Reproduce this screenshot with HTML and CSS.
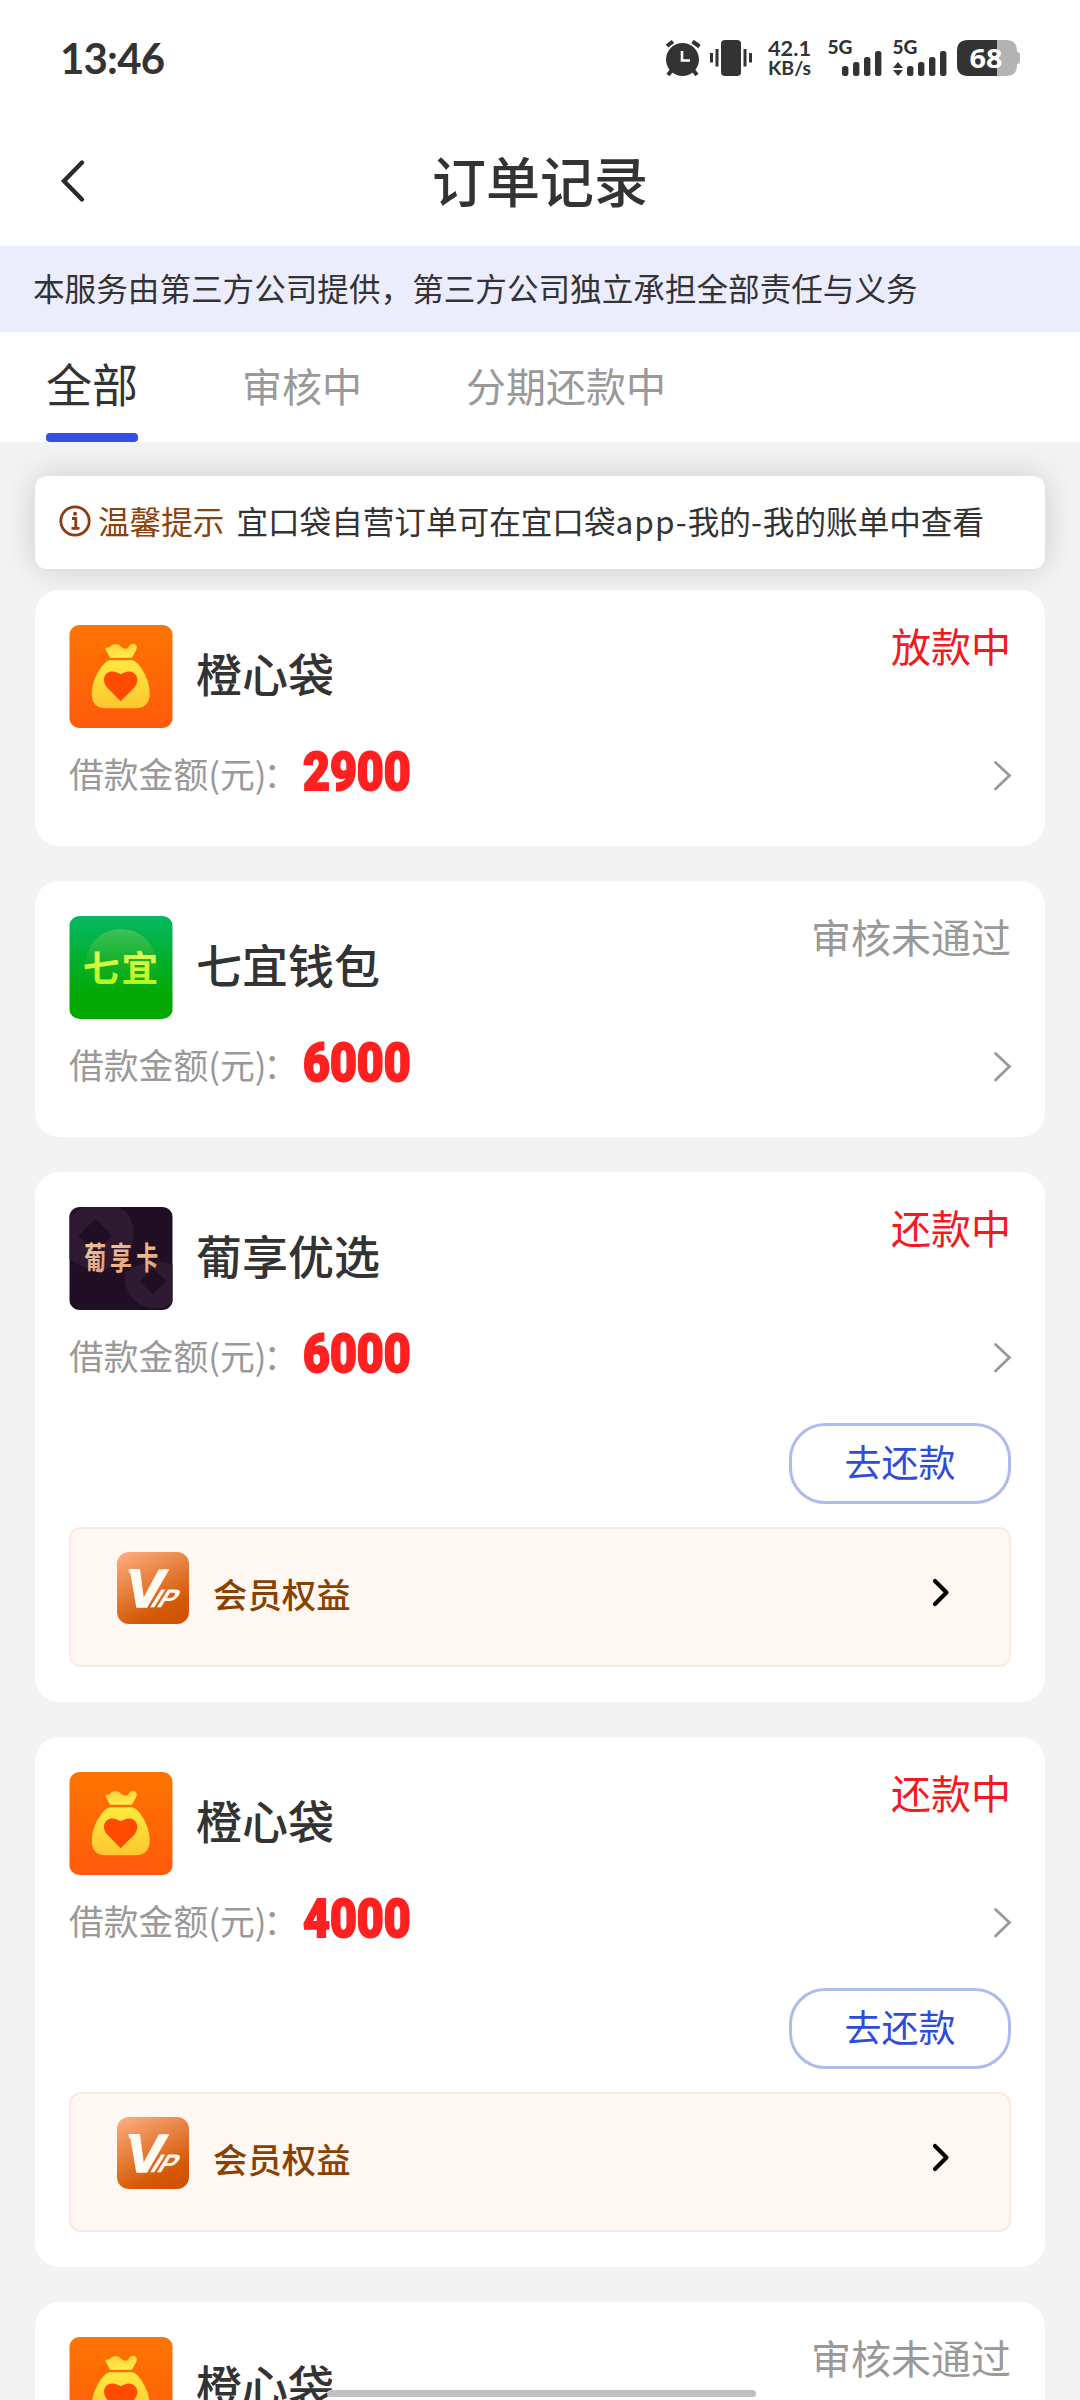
FILE: index.html
```html
<!DOCTYPE html>
<html lang="zh-CN">
<head>
<meta charset="utf-8">
<title>订单记录</title>
<link rel="stylesheet" href="styles.css">
</head>
<body>
<svg class="defs" width="0" height="0">
  <defs>
    <linearGradient id="orange" x1="0" y1="0" x2="0" y2="1"><stop offset="0" stop-color="#ff7500"/><stop offset="1" stop-color="#fe5a0c"/></linearGradient>
    <linearGradient id="gold" x1="0" y1="0" x2="0" y2="1"><stop offset="0" stop-color="#ffe93e"/><stop offset="1" stop-color="#fdc72f"/></linearGradient>
    <linearGradient id="neck" x1="0" y1="0" x2="0" y2="1"><stop offset="0" stop-color="#fdd23a"/><stop offset="1" stop-color="#ffee4a"/></linearGradient>
    <linearGradient id="green" x1="0" y1="0" x2="0" y2="1"><stop offset="0" stop-color="#04b862"/><stop offset=".75" stop-color="#02a906"/><stop offset="1" stop-color="#02a900"/></linearGradient>
    <linearGradient id="glow" x1="0" y1="0" x2="0" y2="1"><stop offset="0" stop-color="#3fc25a"/><stop offset=".6" stop-color="#14ae1c" stop-opacity=".6"/><stop offset="1" stop-color="#02a906" stop-opacity="0"/></linearGradient>
    <linearGradient id="lime" x1="0" y1="0" x2="0" y2="1"><stop offset="0" stop-color="#fdf56a"/><stop offset="1" stop-color="#a4fb0c"/></linearGradient>
    <linearGradient id="copper" x1="0" y1="0" x2="1" y2="1"><stop offset="0" stop-color="#fbd0a8"/><stop offset="1" stop-color="#dc9670"/></linearGradient>
    <linearGradient id="vip" x1=".2" y1="0" x2=".7" y2="1"><stop offset="0" stop-color="#f9a878"/><stop offset=".8" stop-color="#d45a06"/><stop offset="1" stop-color="#d05200"/></linearGradient>
    <symbol id="bag" viewBox="0 0 104 104">
      <rect width="104" height="104" fill="url(#orange)"/>
      <path d="M36 24Q37 22 40 23C43 18 49 18 52 22Q54 24 57 24C60 24 60 19 64 19C68 19 69 23 67 26L63 33H41Z" fill="url(#neck)"/>
      <path d="M41 35.500H63C69 35.500 81 53 81 69C81 79 76 84 67 84H36C27 84 22.500 79 22.500 69C22.500 53 35 35.500 41 35.500Z" fill="url(#gold)"/>
      <path d="M51.700 77L38 63C30 53 39 43.500 48 48Q50 49.500 51.700 49.500Q53.500 49.500 55.500 48C64 43.500 73.500 53 65.500 63Z" fill="#ff4a00"/>
    </symbol>
    <symbol id="next" viewBox="0 0 20 32"><path d="M2.500 2.500L16.500 15.500L2.500 29" fill="none" stroke="#999" stroke-width="2.800" stroke-linecap="round"/></symbol>
    <symbol id="more" viewBox="0 0 18 30"><path d="M3 3L14.500 14.500L3 26" fill="none" stroke="#000" stroke-width="4.200" stroke-linecap="round" stroke-linejoin="round"/></symbol>
    <symbol id="vipmark" viewBox="0 0 72 72">
      <rect width="72" height="72" rx="12" fill="url(#vip)"/>
      <g fill="#fffaf2" stroke="#fffaf2" font-family="Liberation Sans, sans-serif" font-weight="bold">
        <text x="9" y="54.500" font-size="54" font-style="italic" stroke-width="1.600" textLength="38" lengthAdjust="spacingAndGlyphs">V</text>
        <text transform="translate(32 54.500) skewX(-32)" font-size="25" stroke-width=".3" textLength="23" lengthAdjust="spacingAndGlyphs">IP</text>
      </g>
      <path d="M11.500 17H22V21H12Z" fill="#fffaf2"/>
    </symbol>
  </defs>
</svg>
<div class="screen">
  <div class="statusbar">
    <div class="clock">13:46</div>
    <svg class="indicators" width="364" height="60" viewBox="660 28 364 60" fill="#333">
      <circle cx="682.500" cy="59.500" r="16.500"/>
      <path d="M667 46L673 41.500M692.500 41.500L699.500 46.500M672 70L668 75M693 70L697 75" stroke="#333" stroke-width="4" fill="none"/>
      <path d="M682 51V60.500H690" stroke="#fff" stroke-width="2.600" fill="none"/>
      <rect x="721" y="40" width="20" height="36" rx="4"/>
      <path d="M711.500 53V62.500M717 49V66.500M745 49V66.500M750.500 53V62.500" stroke="#333" stroke-width="3"/>
      <g font-family="Lato, sans-serif" font-weight="bold">
        <text x="768" y="55.500" font-size="21" textLength="43" lengthAdjust="spacingAndGlyphs">42.1</text>
        <text x="768" y="75" font-size="19" textLength="43" lengthAdjust="spacingAndGlyphs">KB/s</text>
        <text x="827.500" y="54" font-size="18.500" font-weight="900" textLength="25" lengthAdjust="spacingAndGlyphs">5G</text>
        <text x="892.500" y="54" font-size="18.500" font-weight="900" textLength="25" lengthAdjust="spacingAndGlyphs">5G</text>
      </g>
      <rect x="842" y="66" width="6.400" height="10" rx="2.500"/><rect x="853" y="62" width="6.400" height="14" rx="2.500"/><rect x="864" y="57" width="6.400" height="19" rx="2.500"/><rect x="875" y="51" width="6.400" height="25" rx="2.500"/>
      <path d="M893 68L898 62L903 68ZM893 70L898 76L903 70Z"/>
      <rect x="907" y="66" width="6.400" height="10" rx="2.500"/><rect x="918" y="62" width="6.400" height="14" rx="2.500"/><rect x="929" y="57" width="6.400" height="19" rx="2.500"/><rect x="940" y="51" width="6.400" height="25" rx="2.500"/>
      <path d="M997 40H1006Q1017 40 1017 51V52Q1020 52 1020 55V61Q1020 64 1017 64V65Q1017 76 1006 76H997Z" fill="#b3b3b3"/>
      <path d="M968 40H997V76H968Q957 76 957 65V51Q957 40 968 40Z"/>
      <text x="969.500" y="67.500" font-size="27" font-family="Open Sans, sans-serif" font-weight="bold" fill="#fff" textLength="33" lengthAdjust="spacingAndGlyphs">68</text>
    </svg>
  </div>
  <header class="navbar">
    <svg class="back" width="28" height="46" viewBox="0 0 28 46"><path d="M24 4.500L6 23L24 41.500" fill="none" stroke="#2b2b2b" stroke-width="4.400" stroke-linecap="round"/></svg>
    <h1>订单记录</h1>
  </header>
  <div class="disclaimer"><span>本服务由第三方公司提供，第三方公司独立承担全部责任与义务</span></div>
  <nav class="tabs">
    <span class="tab active">全部</span>
    <span class="tab">审核中</span>
    <span class="tab">分期还款中</span>
  </nav>
  <main>
    <div class="notice">
      <svg class="info" width="32" height="32" viewBox="0 0 32 32" fill="none" stroke="#8d3c12"><circle cx="16" cy="16" r="14.200" stroke-width="2.800"/><path d="M13 13.500H16.800V23M12.500 23.300H20.500" stroke-width="2.800"/><circle cx="16" cy="8.700" r="2" fill="#8d3c12" stroke="none"/></svg>
      <b>温馨提示</b>
      <span>宜口袋自营订单可在宜口袋<i>app-</i>我的<i>-</i>我的账单中查看</span>
    </div>

    <section class="card">
      <div class="head"><svg class="logo"><use href="#bag"/></svg><h2>橙心袋</h2><span class="state red">放款中</span></div>
      <div class="amount"><label>借款金额(元)<em>：</em></label><strong>2900</strong><svg class="next"><use href="#next"/></svg></div>
    </section>

    <section class="card">
      <div class="head">
        <svg class="logo" viewBox="0 0 104 104"><rect width="104" height="104" fill="url(#green)"/><circle cx="52" cy="49" r="36" fill="url(#glow)"/><text x="13.500" y="67" font-size="37" font-weight="bold" fill="url(#lime)" textLength="76">七宜</text></svg>
        <h2>七宜钱包</h2><span class="state">审核未通过</span>
      </div>
      <div class="amount"><label>借款金额(元)<em>：</em></label><strong>6000</strong><svg class="next"><use href="#next"/></svg></div>
    </section>

    <section class="card">
      <div class="head">
        <svg class="logo" viewBox="0 0 104 104"><rect width="104" height="104" fill="#200e25"/>
          <path d="M0 8Q30 -12 56 4Q70 20 62 40Q55 60 35 63Q12 64 0 52Z" fill="#2e1b31"/>
          <path d="M26 12L43 29L26 46L9 29Z" fill="#200e25"/>
          <path d="M56 66Q80 50 104 58V98Q90 106 74 100Q54 90 56 66Z" fill="#2e1b31"/>
          <path d="M84 62L98 75L84 88L71 75Z" fill="#200e25"/>
          <g fill="url(#copper)" font-size="30" font-weight="bold"><text transform="translate(15 63) scale(.74 1.030)">葡</text><text transform="translate(41 63) scale(.74 1.030)">享</text><text transform="translate(67.500 63) scale(.74 1.030)">卡</text></g>
        </svg>
        <h2>葡享优选</h2><span class="state red">还款中</span>
      </div>
      <div class="amount"><label>借款金额(元)<em>：</em></label><strong>6000</strong><svg class="next"><use href="#next"/></svg></div>
      <div class="actions"><button>去还款</button></div>
      <div class="member"><svg class="vip"><use href="#vipmark"/></svg><span>会员权益</span><svg class="more"><use href="#more"/></svg></div>
    </section>

    <section class="card">
      <div class="head"><svg class="logo"><use href="#bag"/></svg><h2>橙心袋</h2><span class="state red">还款中</span></div>
      <div class="amount"><label>借款金额(元)<em>：</em></label><strong>4000</strong><svg class="next"><use href="#next"/></svg></div>
      <div class="actions"><button>去还款</button></div>
      <div class="member"><svg class="vip"><use href="#vipmark"/></svg><span>会员权益</span><svg class="more"><use href="#more"/></svg></div>
    </section>

    <section class="card">
      <div class="head"><svg class="logo"><use href="#bag"/></svg><h2>橙心袋</h2><span class="state">审核未通过</span></div>
    </section>
  </main>
  <div class="homebar"></div>
</div>
</body>
</html>
```
FILE: styles.css
```css
* { box-sizing: border-box; margin: 0; padding: 0; }
body {
  width: 1080px;
  height: 2400px;
  overflow: hidden;
  background: #f3f3f3;
  color: #333;
  font-family: "Noto Sans CJK SC", sans-serif;
}
svg { display: block; flex: none; }
.defs { position: absolute; }
.screen { position: relative; height: 2400px; overflow: hidden; }

.statusbar {
  height: 116px;
  padding: 0 56px 0 60px;
  display: flex;
  justify-content: space-between;
  align-items: center;
  background: #fff;
}
.clock { font: bold 42px/60px Lato, sans-serif; letter-spacing: -.8px; }

.navbar {
  height: 130px;
  padding: 0 58px;
  display: grid;
  grid-template-columns: 28px 1fr 28px;
  align-items: center;
  background: #fff;
}
.navbar h1 { margin-top: -3px; font-size: 54px; line-height: 80px; font-weight: 500; text-align: center; }

.disclaimer {
  height: 86px;
  padding-left: 33px;
  background: #ebedfd;
  font-size: 31.600px;
  line-height: 82px;
  white-space: nowrap;
}

.tabs {
  height: 110px;
  padding-left: 46px;
  display: flex;
  gap: 104px;
  background: #fff;
}
.tab { font-size: 40px; line-height: 106px; color: #999; }
.tab.active {
  width: 92px;
  display: flex;
  flex-direction: column;
  font-size: 46px;
  line-height: 101px;
  color: #333;
}
.tab.active::after { content: ""; height: 9px; border-radius: 4px; background: #3350e6; flex: none; }

main { padding: 34px 35px 0; }
.notice {
  height: 93px;
  margin-bottom: 21px;
  padding: 0 24px;
  display: flex;
  align-items: center;
  border-radius: 12px;
  background: #fff;
  box-shadow: 0 0 34px rgba(0, 0, 0, .16);
  font-size: 31.600px;
  line-height: 50px;
  white-space: nowrap;
}
.info { margin-top: -3px; }
.notice b, .notice span { margin-top: -6px; }
.notice b { margin-left: 7px; margin-right: 12px; font-weight: 400; color: #8a4208; }
.notice i { font-style: normal; letter-spacing: 1px; }

.card {
  position: relative;
  margin-bottom: 35px;
  padding: 35px 34px;
  border-radius: 24px;
  background: #fff;
}
.head { height: 103px; display: flex; align-items: center; }
.logo { width: 104px; height: 103px; border-radius: 11px; }
.head h2 { flex: 1; margin: -9px 0 0 23px; font-size: 46px; line-height: 60px; font-weight: 500; }
.state { align-self: flex-start; margin-top: -10px; font-size: 40px; line-height: 60px; color: #999; }
.red { color: #f3191d; }

.amount { height: 83px; display: flex; align-items: center; }
.amount label { width: 234px; margin-top: 6px; font-size: 34.800px; line-height: 50px; color: #999; white-space: nowrap; }
.amount em { margin-left: -3px; font-style: normal; }
.amount strong {
  flex: 1;
  margin-top: 5px;
  font: 900 54px/60px Roboto, sans-serif;
  color: #ff2020;
  -webkit-text-stroke: 2px #ff2020;
  transform: scaleX(.86);
  transform-origin: 0 50%;
}
.next { width: 20px; height: 32px; margin: 13px -2px 0 0; }

.actions { margin-top: 30px; display: flex; justify-content: flex-end; }
.actions button {
  width: 222px;
  height: 81px;
  padding-bottom: 5px;
  border: 3px solid #afbbec;
  border-radius: 36px;
  background: #fff;
  color: #2f4cd8;
  font: 400 37px/68px "Noto Sans CJK SC", sans-serif;
}
.member {
  height: 140px;
  margin-top: 23px;
  padding: 23px 59px 0 46px;
  display: flex;
  border: 2px solid #fae9e0;
  border-radius: 12px;
  background: #fff7f2;
}
.vip { width: 72px; height: 72px; }
.member span { flex: 1; margin-left: 24px; font-size: 34.400px; line-height: 83px; font-weight: 500; color: #8a4100; }
.more { width: 18px; height: 30px; margin-top: 26px; }

.homebar {
  position: absolute;
  left: 327px;
  top: 2390px;
  width: 429px;
  height: 7px;
  border-radius: 4px;
  background: #c0c0c0;
}
```
